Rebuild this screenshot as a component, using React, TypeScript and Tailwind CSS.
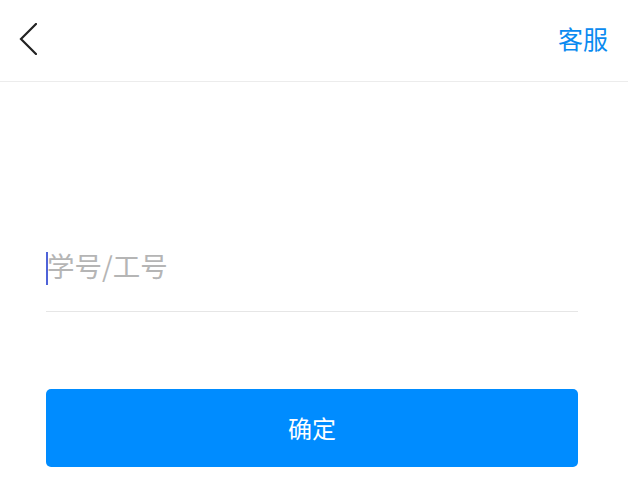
import { useState } from "react";

export default function App() {
  const [id, setId] = useState("");

  return (
    <div className="w-full min-h-screen bg-white font-['Noto_Sans_CJK_SC','Noto_Sans',sans-serif]">
      {/* Top bar */}
      <header className="h-[82px] flex items-center justify-between border-b border-[#ececec] pl-[17px] pr-[20px]">
        <button className="w-[20px] h-[32px] flex items-center -mt-[3px]" aria-label="back">
          <svg width="20" height="32" viewBox="0 0 20 32" fill="none">
            <path d="M19 1L4 16l15 15" stroke="#222" strokeWidth="2.2" strokeLinecap="square" />
          </svg>
        </button>
        <span className="text-[25px] leading-none text-[#0a8af0] -mt-[4px]">客服</span>
      </header>

      <main className="pl-[46px] pr-[50px]">
        {/* ID input */}
        <div className="mt-[150px] h-[80px] flex items-center pb-[8px] border-b border-[#e6e6e6]">
          <span className="w-[2px] h-[33px] mt-[2px] bg-[#4f63d8]" />
          <input
            value={id}
            onChange={(e) => setId(e.target.value)}
            placeholder="学号/工号"
            className="flex-1 -ml-[1px] -mt-[3px] bg-transparent outline-none text-[27.5px] text-[#333] placeholder:text-[#b5b5b5]"
          />
        </div>

        <button className="mt-[77px] w-full h-[78px] rounded-[5px] bg-[#008cff] text-white text-[24px]">
          确定
        </button>
      </main>
    </div>
  );
}
